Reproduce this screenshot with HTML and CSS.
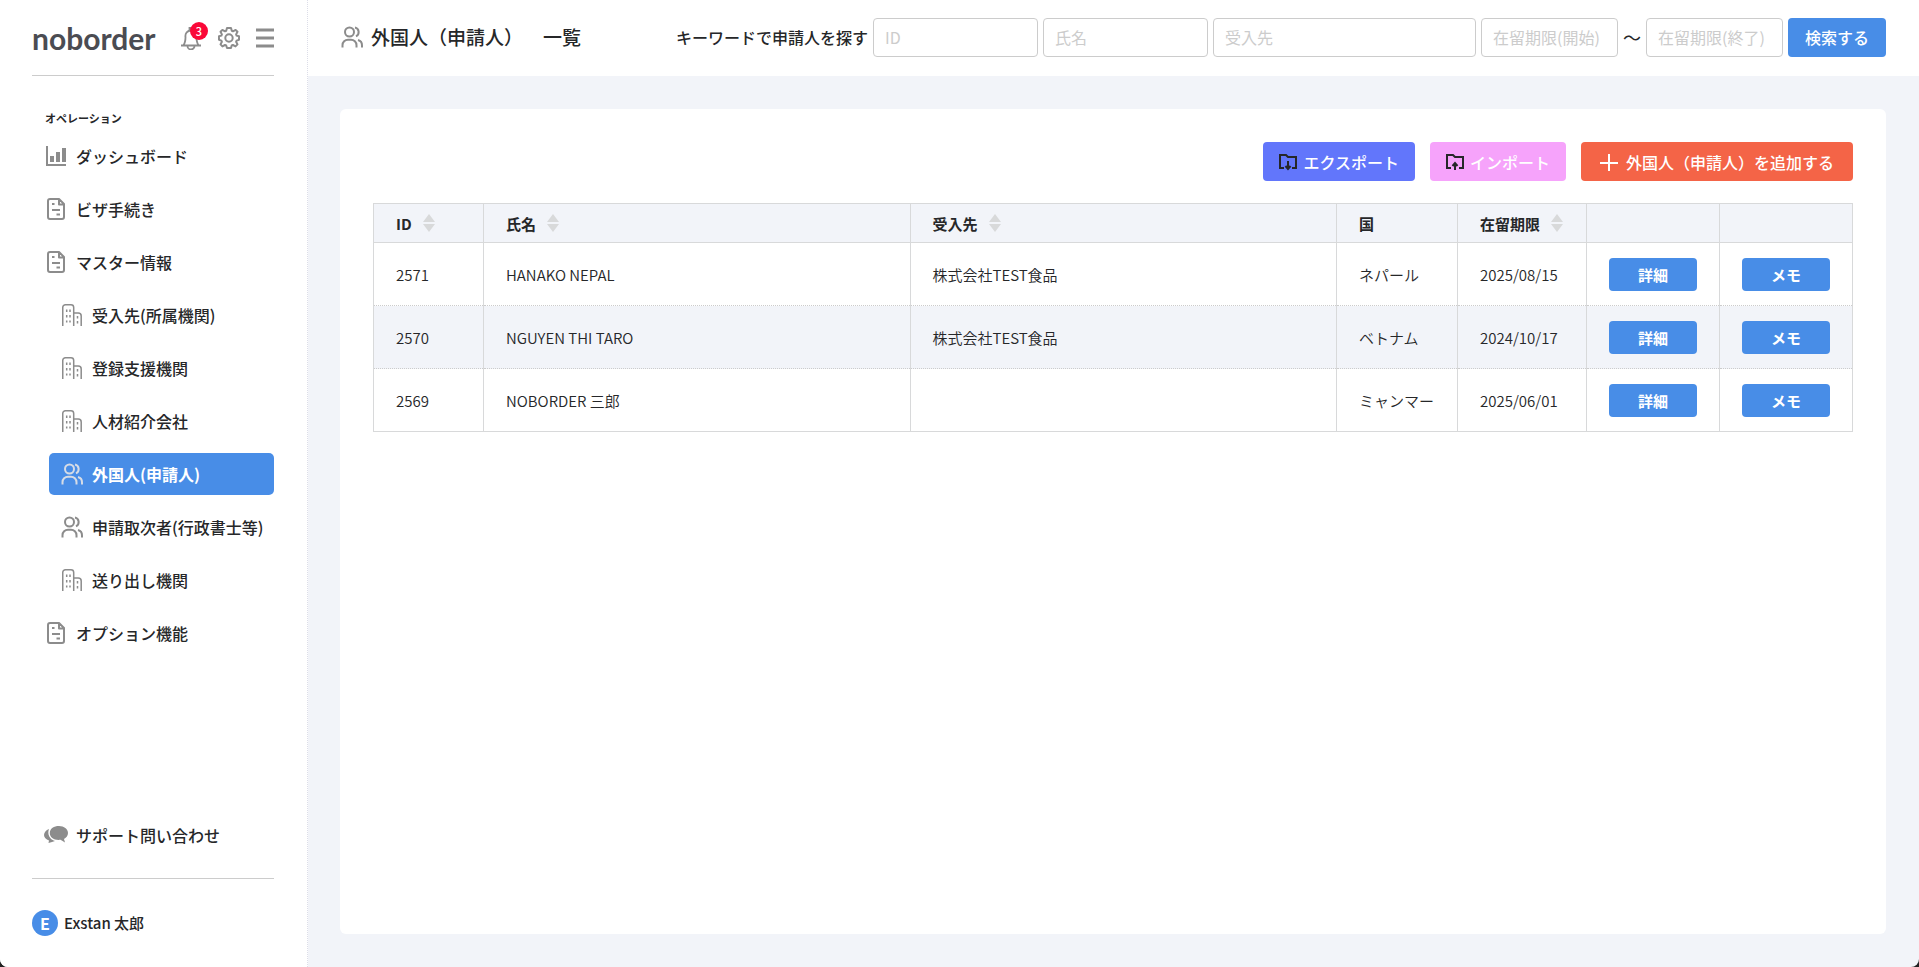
FILE: index.html
```html
<!DOCTYPE html>
<html lang="ja">
<head>
<meta charset="utf-8">
<title>noborder</title>
<link rel="stylesheet" href="styles.css">
</head>
<body>
<svg class="defs" aria-hidden="true">
  <symbol id="i-doc" viewBox="0 0 18 22"><path d="M3 1h9l5 5v13a2 2 0 0 1-2 2H3a2 2 0 0 1-2-2V3a2 2 0 0 1 2-2zM12 1.500v5h5M5 6h2.500M5 12h8M9.500 16.500h3.500" fill="none" stroke="currentColor" stroke-width="2" stroke-linejoin="round"/></symbol>
  <symbol id="i-building" viewBox="0 0 20 22"><path d="M.75 22V3.500A2.700 2.700 0 0 1 3.500.75h5.500a2.700 2.700 0 0 1 2.700 2.700V22M11.700 9h4.500a3 3 0 0 1 3 3v10" fill="none" stroke="currentColor" stroke-width="1.500"/><path d="M4.700 5.500v13M8 5.500v13" fill="none" stroke="currentColor" stroke-width="1.500" stroke-dasharray="2.500 3"/><path d="M15.500 12v8" fill="none" stroke="currentColor" stroke-width="1.500" stroke-dasharray="2.500 2.500"/></symbol>
  <symbol id="i-people" viewBox="0 0 22 22"><g fill="none" stroke="currentColor" stroke-width="2"><circle cx="8.500" cy="6" r="4.500"/><path d="M1.500 21.500v-2.300a5.500 5.500 0 0 1 5.500-5.500h3a5.500 5.500 0 0 1 5.500 5.500v2.300M14 1.500a4.700 4.700 0 0 1 1 8.800M17 14a5.500 5.500 0 0 1 4 5.500v2"/></g></symbol>
  <symbol id="i-sort" viewBox="0 0 12 18"><path d="M6 0l6 8H0zM6 18l6-8H0z" fill="currentColor"/></symbol>
</svg>
<div class="app">
  <aside class="sidebar">
    <div class="brand">
      <a class="logo" href="#">noborder</a>
      <div class="tools">
        <button class="tool bell" aria-label="通知">
          <svg width="22" height="24" viewBox="0 0 22 24" fill="none" stroke="currentColor" stroke-width="1.800"><path d="M1 19.500h20M3.500 19c2-2.500 2-4.500 2-8A5.500 5.500 0 0 1 11 4.500a5.500 5.500 0 0 1 5.500 6.500c0 3.500 0 5.500 2 8M9.500 4V2h3v2M7.500 20a3.500 3.500 0 0 0 7 0"/></svg>
          <span class="badge">3</span>
        </button>
        <button class="tool" aria-label="設定">
          <svg width="22" height="22" viewBox="0 0 22 22" fill="none" stroke="currentColor" stroke-width="2" stroke-linejoin="round"><path d="M9 1h4l.8 2.800 1.200.5 2.600-1.400 1.900 1.900-1.400 2.600.5 1.200L21 9.200v3.600l-2.400.8-.5 1.200 1.400 2.600-2 2-2.600-1.400-1.200.5L13 21H9l-.8-2.500-1.200-.5-2.600 1.400-1.900-2 1.400-2.600-.5-1.200L1 12.800V9.200l2.400-.6.5-1.200L2.500 4.800l1.900-1.900L7 4.300l1.200-.5z"/><circle cx="11" cy="11" r="3.700"/></svg>
        </button>
        <button class="tool" aria-label="メニュー">
          <svg width="18" height="20" viewBox="0 0 18 20" fill="currentColor"><path d="M0 .5h18v3H0zM0 8.500h18v3H0zM0 16.500h18v3H0z"/></svg>
        </button>
      </div>
    </div>
    <nav class="nav">
      <h2 class="nav-title">オペレーション</h2>
      <ul class="menu">
        <li><a class="item" href="#"><svg class="icon" width="22" height="22" viewBox="0 0 22 22" fill="currentColor"><path d="M1 1h2v18h18v2H1zM5 11h4v6H5zM11 7h4v10h-4zM17 3h4v14h-4z"/></svg>ダッシュボード</a></li>
        <li><a class="item" href="#"><svg class="icon"><use href="#i-doc"/></svg>ビザ手続き</a></li>
        <li><a class="item" href="#"><svg class="icon"><use href="#i-doc"/></svg>マスター情報</a></li>
        <li>
          <ul class="menu submenu">
            <li><a class="item" href="#"><svg class="icon"><use href="#i-building"/></svg>受入先(所属機関)</a></li>
            <li><a class="item" href="#"><svg class="icon"><use href="#i-building"/></svg>登録支援機関</a></li>
            <li><a class="item" href="#"><svg class="icon"><use href="#i-building"/></svg>人材紹介会社</a></li>
            <li><a class="item active" href="#" aria-current="page"><svg class="icon"><use href="#i-people"/></svg>外国人(申請人)</a></li>
            <li><a class="item" href="#"><svg class="icon"><use href="#i-people"/></svg>申請取次者(行政書士等)</a></li>
            <li><a class="item" href="#"><svg class="icon"><use href="#i-building"/></svg>送り出し機関</a></li>
          </ul>
        </li>
        <li><a class="item" href="#"><svg class="icon"><use href="#i-doc"/></svg>オプション機能</a></li>
      </ul>
    </nav>
    <div class="support">
      <a class="item" href="#"><svg class="icon" width="24" height="22" viewBox="0 0 24 22" fill="currentColor"><path d="M15 2c5 0 9 3.200 9 7 0 2.500-1.500 4.700-4 6l1 3.500-4.500-2.700C10 16.500 5.800 13.500 5.800 9S10 2 15 2z"/><path d="M5 5C3 10 5.500 15.500 11 17l-3 1-3.500 1 .5-2.500C2 15.500 0 13.500 0 11c0-2.500 2-5 5-6z"/></svg>サポート問い合わせ</a>
    </div>
    <a class="user" href="#"><span class="avatar">E</span>Exstan 太郎</a>
  </aside>

  <div class="content">
    <header class="header">
      <svg class="icon title-icon"><use href="#i-people"/></svg>
      <h1 class="title">外国人（申請人）<span>一覧</span></h1>
      <form class="search">
        <label class="search-label" for="q-id">キーワードで申請人を探す</label>
        <input class="field" id="q-id" type="text" placeholder="ID">
        <input class="field" type="text" placeholder="氏名" aria-label="氏名">
        <input class="field wide" type="text" placeholder="受入先" aria-label="受入先">
        <input class="field date" type="text" placeholder="在留期限(開始)" aria-label="在留期限(開始)">
        <span class="tilde">〜</span>
        <input class="field date" type="text" placeholder="在留期限(終了)" aria-label="在留期限(終了)">
        <button class="btn" type="button">検索する</button>
      </form>
    </header>
    <main class="card">
      <div class="actions">
        <button class="btn export"><svg width="18" height="18" viewBox="0 0 18 18" fill="none" stroke="#262729" stroke-width="2"><path d="M5 15H1V2h6l2 2h8v11h-4M9 8v8M6.500 13L9 16l2.500-3"/></svg>エクスポート</button>
        <button class="btn import"><svg width="18" height="18" viewBox="0 0 18 18" fill="none" stroke="#262729" stroke-width="2"><path d="M5 15H1V2h6l2 2h8v11h-4M9 17V10M6.500 13L9 10l2.500 3"/></svg>インポート</button>
        <button class="btn add"><svg width="18" height="18" viewBox="0 0 18 18" fill="none" stroke="#fff" stroke-width="2"><path d="M9 1v17M0 10h18"/></svg>外国人（申請人）を追加する</button>
      </div>
      <table class="table">
        <colgroup><col class="c-id"><col><col><col class="c-country"><col class="c-limit"><col class="c-btn"><col class="c-btn"></colgroup>
        <thead>
          <tr>
            <th><span class="th">ID<svg class="sort"><use href="#i-sort"/></svg></span></th>
            <th><span class="th">氏名<svg class="sort"><use href="#i-sort"/></svg></span></th>
            <th><span class="th">受入先<svg class="sort"><use href="#i-sort"/></svg></span></th>
            <th>国</th>
            <th><span class="th">在留期限<svg class="sort"><use href="#i-sort"/></svg></span></th>
            <th></th>
            <th></th>
          </tr>
        </thead>
        <tbody>
          <tr><td>2571</td><td>HANAKO NEPAL</td><td>株式会社TEST食品</td><td>ネパール</td><td>2025/08/15</td><td><button class="mini">詳細</button></td><td><button class="mini">メモ</button></td></tr>
          <tr><td>2570</td><td>NGUYEN THI TARO</td><td>株式会社TEST食品</td><td>ベトナム</td><td>2024/10/17</td><td><button class="mini">詳細</button></td><td><button class="mini">メモ</button></td></tr>
          <tr><td>2569</td><td>NOBORDER 三郎</td><td></td><td>ミャンマー</td><td>2025/06/01</td><td><button class="mini">詳細</button></td><td><button class="mini">メモ</button></td></tr>
        </tbody>
      </table>
    </main>
  </div>
</div>
</body>
</html>
```
FILE: styles.css
```css
* { box-sizing: border-box; }
body {
  margin: 0;
  background: #222;
  color: #262729;
  font-family: "Noto Sans CJK JP", sans-serif;
  font-size: 16px;
}
h1, h2, ul { margin: 0; padding: 0; }
ul { list-style: none; }
a { color: inherit; text-decoration: none; }
button, input { font: inherit; color: inherit; }
button { border: 0; padding: 0; cursor: pointer; }
.defs { position: absolute; width: 0; height: 0; }

.app {
  display: flex;
  min-height: 100vh;
  background: #f2f4f9;
  border-radius: 0 0 8px 8px;
  overflow: hidden;
}

/* Sidebar */
.sidebar {
  flex: 0 0 308px;
  display: flex;
  flex-direction: column;
  padding: 0 33px 31px 32px;
  background: #fff;
  border-right: 1px dotted #dcdde8;
}
.brand {
  display: flex;
  align-items: center;
  justify-content: space-between;
  height: 76px;
  border-bottom: 1px solid #ccc;
}
.logo {
  font-family: Lato, sans-serif;
  font-size: 30px;
  font-weight: 700;
  line-height: 40px;
  color: #4b4c52;
}
.tools { display: flex; align-items: center; gap: 16px; }
.tool {
  position: relative;
  display: flex;
  background: none;
  color: #8c8c8c;
}
.badge {
  position: absolute;
  top: -4px;
  right: -6px;
  width: 18px;
  height: 18px;
  border-radius: 50%;
  background: #fa0838;
  color: #fff;
  font-size: 11px;
  font-weight: 500;
  line-height: 18px;
  text-align: center;
}
.nav { padding-top: 32px; }
.nav-title {
  padding-left: 13px;
  margin-bottom: 7px;
  font-size: 11px;
  font-weight: 700;
  line-height: 20px;
}
.menu { display: flex; flex-direction: column; gap: 11px; }
.submenu { padding-left: 17px; }
.item {
  display: flex;
  align-items: center;
  gap: 8px;
  height: 42px;
  padding-left: 12px;
  border-radius: 5px;
  font-weight: 500;
  white-space: nowrap;
}
.icon { flex: none; width: 24px; height: 22px; color: #8c8c8c; }
.submenu .item { padding-left: 11px; }
.active { background: #488de7; color: #fff; font-weight: 700; }
.active .icon { color: #d6dce6; }
.support {
  margin-top: auto;
  padding-bottom: 22px;
  border-bottom: 1px solid #ccc;
}
.user {
  display: flex;
  align-items: center;
  gap: 6px;
  margin-top: 31px;
  font-size: 15px;
  font-weight: 500;
  line-height: 26px;
}
.avatar {
  width: 26px;
  height: 26px;
  border-radius: 50%;
  background: #488de7;
  color: #fff;
  font-size: 16px;
  font-weight: 700;
  text-align: center;
}

/* Header */
.content { flex: 1; min-width: 0; display: flex; flex-direction: column; }
.header {
  display: flex;
  align-items: center;
  height: 76px;
  padding: 0 33px 2px 32px;
  background: #fff;
}
.title-icon { margin-right: 7px; }
.title { font-size: 19px; font-weight: 500; line-height: 28px; white-space: nowrap; }
.title span { margin-left: 20px; }
.search {
  display: flex;
  align-items: center;
  gap: 5px;
  margin-left: auto;
}
.search-label { font-weight: 500; white-space: nowrap; }
.field {
  width: 165px;
  height: 39px;
  padding: 0 11px;
  border: 1px solid #ccc;
  border-radius: 4px;
  background: #fff;
}
.field::placeholder { color: #ccc; opacity: 1; }
.wide { width: 263px; }
.date { width: 137px; }
.tilde { width: 18px; font-size: 18px; line-height: 24px; }
.btn {
  display: inline-flex;
  align-items: center;
  justify-content: center;
  gap: 6px;
  height: 39px;
  padding: 0 17px;
  border-radius: 4px;
  background: #488de7;
  color: #fff;
  font-weight: 500;
  white-space: nowrap;
}

/* Card and table */
.card {
  flex: 1;
  margin: 33px;
  margin-left: 32px;
  padding: 33px;
  background: #fff;
  border-radius: 6px;
}
.actions { display: flex; justify-content: flex-end; gap: 15px; margin-bottom: 22px; }
.export { padding: 0 16px; background: #6276fb; }
.import { padding: 0 16px; background: #f6a3fb; }
.add { gap: 8px; padding: 0 19px; background: #f46447; }
.table {
  width: 100%;
  table-layout: fixed;
  border-collapse: collapse;
  border: 1px solid #d8d9da;
  font-size: 15px;
}
.c-id { width: 110px; }
.c-country { width: 121px; }
.c-limit { width: 129px; }
.c-btn { width: 133px; }
.table th, .table td {
  padding: 0 0 0 22px;
  border-left: 1px solid #d8d9da;
  text-align: left;
  white-space: nowrap;
}
.table th {
  height: 39px;
  background: #f2f4f9;
  border-bottom: 1px solid #d8d9da;
  font-weight: 700;
}
.th { display: flex; align-items: center; gap: 11px; }
.sort { width: 12px; height: 18px; color: #d8d9da; }
.table td { height: 63px; font-weight: 350; }
.table tbody tr + tr td { border-top: 1px dotted #ccc; }
.table tbody tr:nth-child(even) { background: #f2f4f9; }
.mini {
  display: block;
  width: 88px;
  height: 33px;
  border-radius: 4px;
  background: #488de7;
  color: #fff;
  font-weight: 700;
}
```
